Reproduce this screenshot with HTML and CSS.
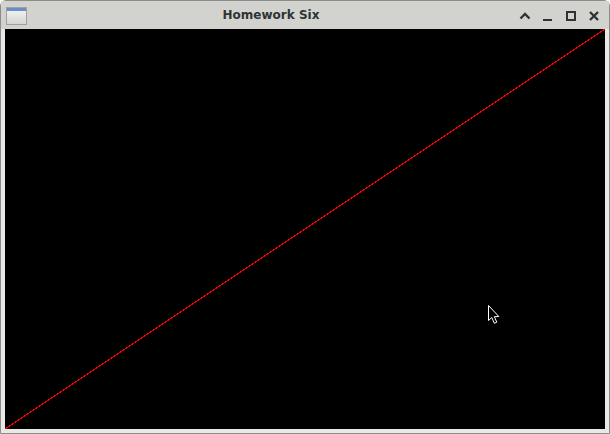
FILE: index.html
```html
<!DOCTYPE html>
<html lang="en">
<head>
    <meta charset="UTF-8">
    <title>Homework Six</title>
    <link rel="stylesheet" href="styles.css">
</head>
<body>
    <div class="window">
        <div class="titlebar">
            <svg class="app-icon" width="21" height="18" viewBox="0 0 21 18">
                <defs>
                    <linearGradient id="pane" x1="0" y1="0" x2="0" y2="1">
                        <stop offset="0" stop-color="#f6f6f4"/>
                        <stop offset="1" stop-color="#d4d6d0"/>
                    </linearGradient>
                </defs>
                <rect x="0.500" y="0.500" width="20" height="17" fill="url(#pane)" stroke="#a0a09e"/>
                <rect x="1" y="1" width="19" height="3" fill="#6a8cc8"/>
            </svg>
            <div class="title">Homework Six</div>
            <div class="buttons">
                <svg width="12" height="12" viewBox="0 0 12 12"><path d="M1.500 8.500 L6 4 L10.500 8.500" fill="none" stroke="#2e3436" stroke-width="2.400"/></svg>
                <svg width="12" height="12" viewBox="0 0 12 12"><path d="M1 10 H10" fill="none" stroke="#2e3436" stroke-width="2"/></svg>
                <svg width="12" height="12" viewBox="0 0 12 12"><rect x="2" y="2" width="8" height="8" fill="none" stroke="#2e3436" stroke-width="2"/></svg>
                <svg width="12" height="12" viewBox="0 0 12 12"><path d="M2 2 L10 10 M10 2 L2 10" fill="none" stroke="#2e3436" stroke-width="2.400"/></svg>
            </div>
        </div>
        <svg class="canvas" width="600" height="400" viewBox="0 0 600 400">
            <line class="diagonal" x1="0" y1="400" x2="600" y2="0"/>
        </svg>
        <svg class="cursor" width="14" height="21" viewBox="0 0 14 21">
            <path d="M1.500 1.500 V16.500 L4.800 13.500 L7.300 19.300 L9.800 18.200 L7.300 12.700 L11.800 12.500 Z" fill="#000" stroke="#fff" stroke-width="1"/>
        </svg>
    </div>
</body>
</html>
```

FILE: styles.css
```css
html, body {
    margin: 0;
    padding: 0;
    background: #fff;
    overflow: hidden;
}
.window {
    position: relative;
    width: 610px;
    height: 434px;
    box-sizing: border-box;
    padding: 0 5px 5px 5px;
    background: #e8e8e6;
    border: 1px solid #8c8c8a;
    border-radius: 6px 6px 0 0;
    display: flex;
    flex-direction: column;
}
.titlebar {
    height: 28px;
    margin: 0 -5px;
    padding: 0 9px 0 5px;
    background: #d2d2ce;
    display: flex;
    align-items: center;
    flex: none;
}
.app-icon {
    margin-top: 2px;
}
.title {
    flex: 1;
    padding-right: 4px;
    text-align: center;
    font: bold 12px "DejaVu Sans", sans-serif;
    color: #2e3436;
}
.buttons {
    display: flex;
    gap: 11px;
    margin-top: 2px;
}
.canvas {
    display: block;
    margin-left: -1px;
    background: #000;
    flex: none;
}
.diagonal {
    stroke: #ff0000;
    stroke-width: 1;
    shape-rendering: crispEdges;
}
.cursor {
    position: absolute;
    left: 486px;
    top: 303px;
}
```
